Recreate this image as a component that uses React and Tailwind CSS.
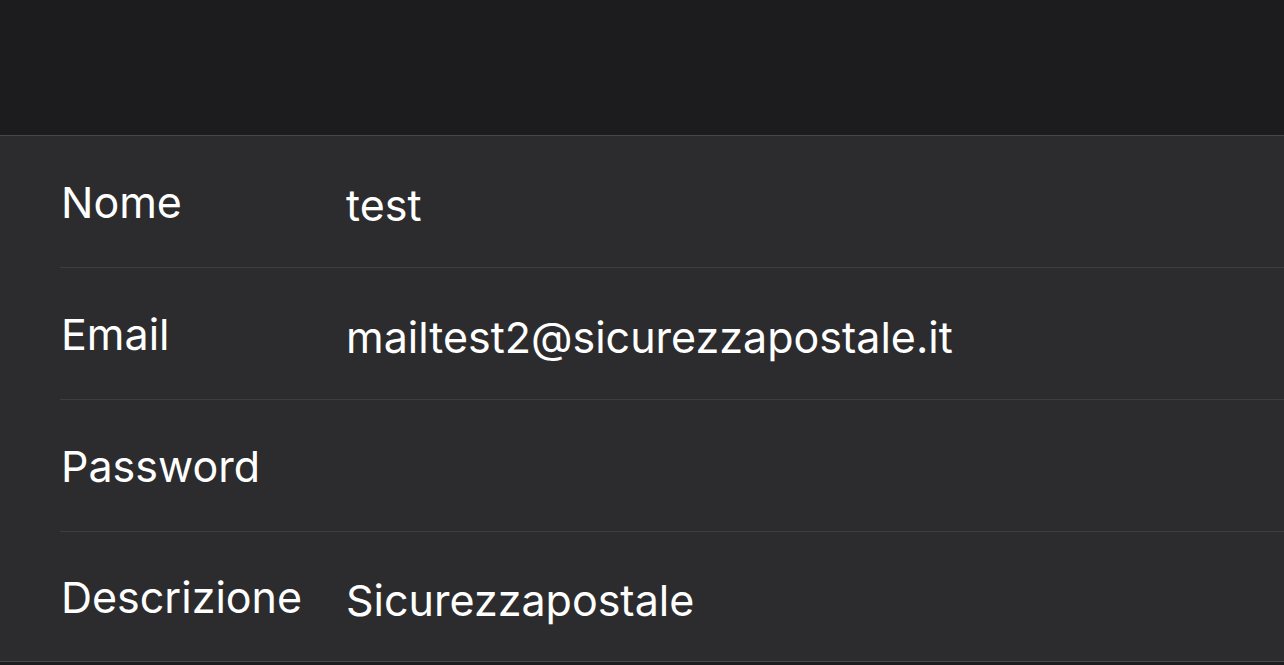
import React from "react";

const rows = [
  { label: "Nome", value: "test" },
  { label: "Email", value: "mailtest2@sicurezzapostale.it" },
  { label: "Password", value: "" },
  { label: "Descrizione", value: "Sicurezzapostale" },
];

const App = () => {
  return (
    <div className="min-h-screen w-full bg-[#1c1c1e] text-white" style={{ fontFamily: "Inter, 'Liberation Sans', sans-serif" }}>
      <div className="h-[136px] border-b border-[#48484a]"></div>
      <div className="border-b border-[#48484a] bg-[#2c2c2e] pl-[60px]">
        {rows.map((row, i) => (
          <div
            key={row.label}
            className={`flex items-center pl-px ${
              i < rows.length - 1 ? "h-[132px] border-b border-[#3d3d40]" : "h-[129px]"
            }`}
          >
            <div className="w-[285px] shrink-0 pt-[2px] text-[43px] leading-none">
              {row.label}
            </div>
            <div className="pt-[8px] text-[43px] leading-none">{row.value}</div>
          </div>
        ))}
      </div>
    </div>
  );
};

export default App;
